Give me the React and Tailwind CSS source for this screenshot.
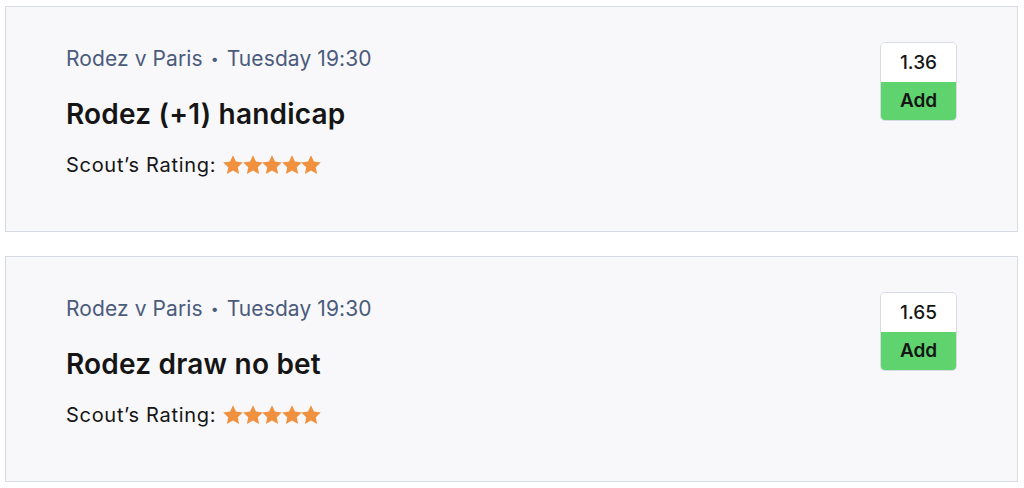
import React from 'react'

const tips = [
  { match: 'Rodez v Paris', time: 'Tuesday 19:30', title: 'Rodez (+1) handicap', odds: '1.36' },
  { match: 'Rodez v Paris', time: 'Tuesday 19:30', title: 'Rodez draw no bet', odds: '1.65' },
]

function Star(){
  return (
    <svg width="20" height="20" viewBox="1.5 1.5 21 21" className="-mr-[0.5px]">
      <path d="M12 1.8l3.1 6.6 7.2.9-5.3 5 1.4 7.1L12 17.9l-6.4 3.5 1.4-7.1-5.3-5 7.2-.9z" fill="#f0913f" />
    </svg>
  )
}

function TipCard({ tip }){
  return (
    <div className="h-[226px] border border-[#d6dbe4] bg-[#f8f8fb] pt-[37px] pl-[60px] pr-[60px] flex justify-between">
      <div>
        <div className="text-[21px] leading-[30px] tracking-[0.1px] text-[#4b5b7c]">
          {tip.match} <span className="text-[14px] align-[2px] mx-[2px]">•</span> {tip.time}
        </div>
        <div className="mt-[22px] text-[28px] leading-[36px] font-semibold tracking-[0.2px] text-[#151515]">{tip.title}</div>
        <div className="mt-[20px] flex items-center gap-[7px] text-[20px] leading-[26px] tracking-[0.7px] text-[#151515]">
          <span>Scout’s Rating:</span>
          <span className="flex items-center">
            <Star /><Star /><Star /><Star /><Star />
          </span>
        </div>
      </div>
      <div className="-mt-[2px]">
        <div className="w-[77px] rounded-[5px] border border-[#d6dbe4] overflow-hidden">
          <div className="h-[39px] pt-[2px] bg-white flex items-center justify-center text-[19px] font-medium text-[#151515]">{tip.odds}</div>
          <div className="h-[38px] bg-[#5fd46e] flex items-center justify-center text-[19px] font-semibold text-[#151515]">Add</div>
        </div>
      </div>
    </div>
  )
}

export default function App(){
  return (
    <div className="w-[1024px] h-[488px] bg-white pt-[6px] pl-[5px] pr-[6px] flex flex-col gap-[24px]" style={{ fontFamily: 'Inter, "Noto Sans", sans-serif' }}>
      {tips.map((t, i) => <TipCard key={i} tip={t} />)}
    </div>
  )
}
